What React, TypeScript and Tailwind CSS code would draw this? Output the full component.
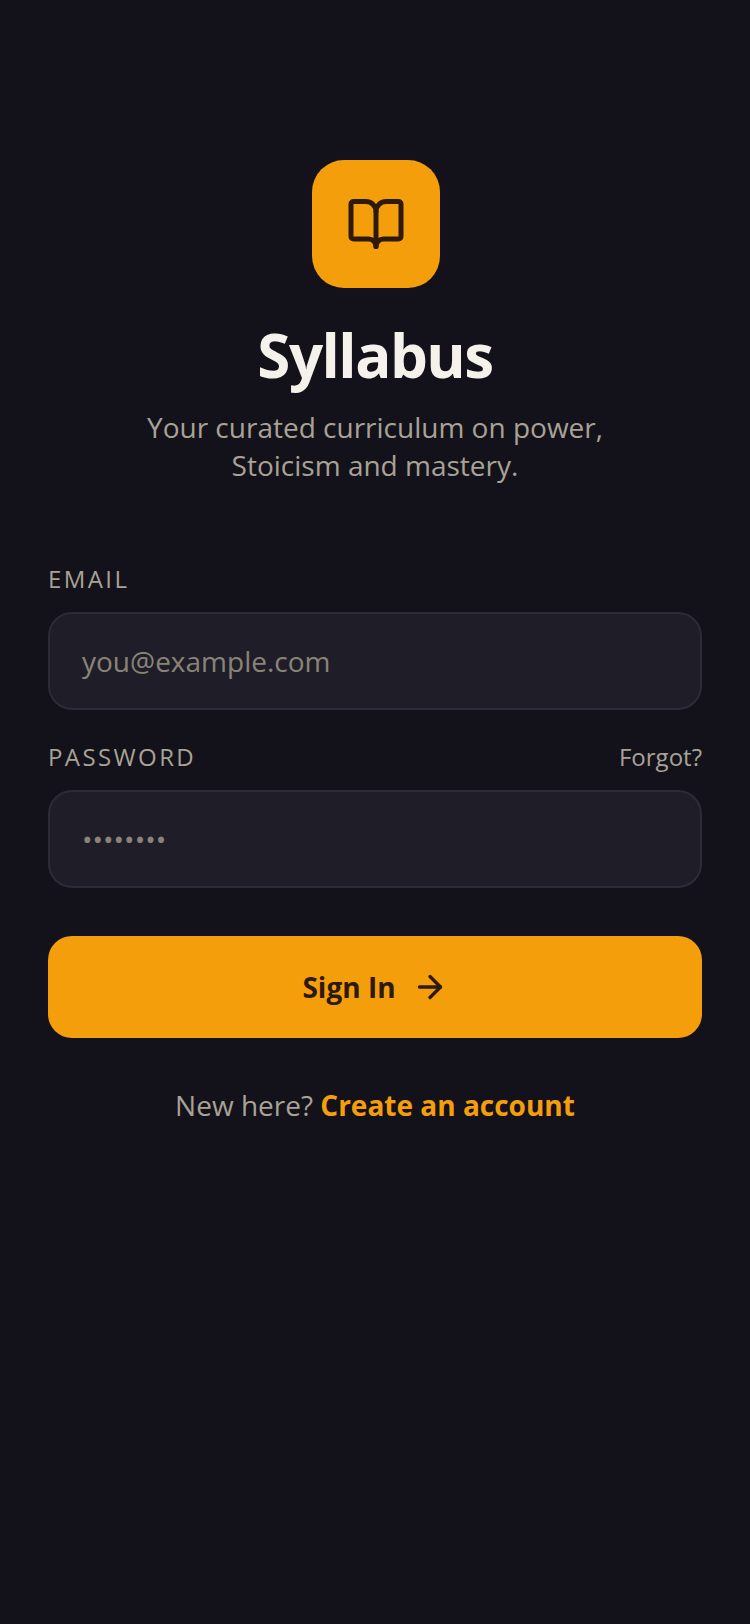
import { ArrowRight, BookOpen } from "lucide-react";

export default function App() {
  return (
    <div className="min-h-[1624px] w-[750px] bg-[#13121a] px-12 pt-40 font-['Open_Sans',sans-serif]">
      <div className="flex flex-col items-center">
        <div className="ml-[2px] flex h-32 w-32 items-center justify-center rounded-[32px] bg-[#f59e0b]">
          <BookOpen size={60} strokeWidth={2} className="text-[#2e1a0a]" />
        </div>
        <h1 className="mt-[31px] text-[60px] leading-[72px] font-bold tracking-[-1.5px] text-[#f5f2ec]">Syllabus</h1>
        <p className="mt-[17px] text-center text-[28px] leading-[38px] text-[#a8a297]">
          Your curated curriculum on power,
          <br />
          Stoicism and mastery.
        </p>
      </div>

      <div className="mt-[80px]">
        <label className="block pb-[2px] text-[24px] leading-[30px] tracking-[2.4px] text-[#a8a297]">EMAIL</label>
        <div className="mt-4 flex h-[98px] items-center rounded-[24px] border-2 border-[#2c2b37] bg-[#1f1e28] px-8 text-[28px] text-[#8a8478]">
          you@example.com
        </div>

        <div className="mt-[32px] flex items-center justify-between pb-[2px]">
          <label className="text-[24px] leading-[30px] tracking-[2.4px] text-[#a8a297]">PASSWORD</label>
          <span className="text-[24px] leading-[30px] text-[#a8a297]">Forgot?</span>
        </div>
        <div className="mt-4 flex h-[98px] items-center rounded-[24px] border-2 border-[#2c2b37] bg-[#1f1e28] px-8 text-[28px] text-[#8a8478]">
          ••••••••
        </div>

        <button className="mt-12 flex h-[102px] w-full items-center justify-center gap-4 rounded-[24px] bg-[#f59e0b] text-[28px] font-bold text-[#2e1a0a]">
          Sign In
          <ArrowRight size={36} strokeWidth={2.25} />
        </button>

        <p className="mt-12 text-center text-[28px] leading-[38px] text-[#a8a297]">
          New here? <span className="font-bold text-[#f59e0b]">Create an account</span>
        </p>
      </div>
    </div>
  );
}
